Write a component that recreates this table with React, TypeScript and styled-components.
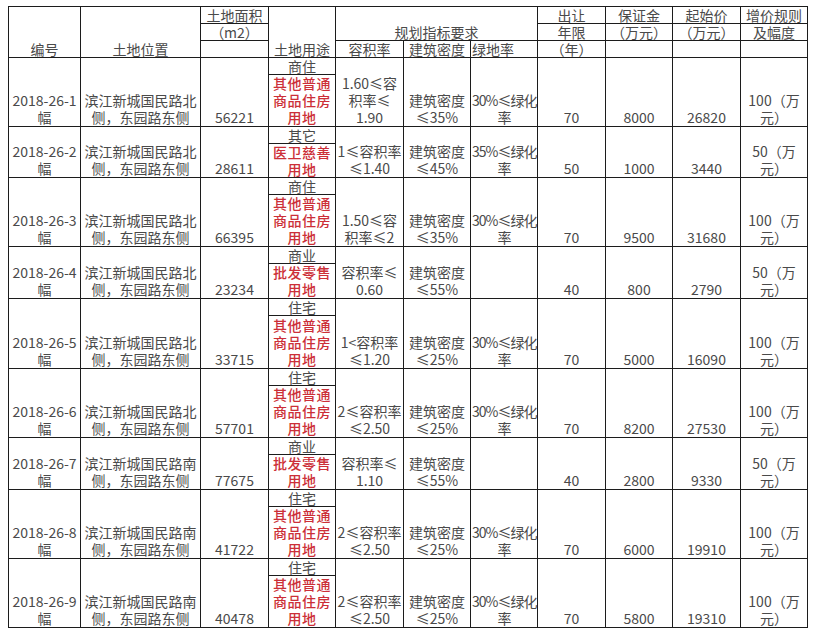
import React from 'react';
import styled, { createGlobalStyle } from 'styled-components';

const GlobalStyle = createGlobalStyle`
    body {
        margin: 0;
        padding: 6px 0 0 8px;
        background: #ffffff;
        font-family: "Noto Sans CJK SC", "Noto Sans", sans-serif;
        color: #4a4a4a;
    }
`;

// 地块数据
interface Parcel {
    no: string;
    location: string;
    area: string;
    useType: string;
    useDetail: string[];
    far: string[];
    density: string[];
    green: string[];
    years: string;
    deposit: string;
    price: string;
    rule: string;
    height: number;
}

const north = '滨江新城国民路北';
const south = '滨江新城国民路南';
const housing = ['其他普通', '商品住房', '用地'];
const retail = ['批发零售', '用地'];
const green30 = ['30%≤绿化', '率'];
const rule100 = '100（万';
const rule50 = '50（万';

const parcels: Parcel[] = [
    { no: '1', location: north, area: '56221', useType: '商住', useDetail: housing, far: ['1.60≤容', '积率≤', '1.90'], density: ['建筑密度', '≤35%'], green: green30, years: '70', deposit: '8000', price: '26820', rule: rule100, height: 69 },
    { no: '2', location: north, area: '28611', useType: '其它', useDetail: ['医卫慈善', '用地'], far: ['1≤容积率', '≤1.40'], density: ['建筑密度', '≤45%'], green: ['35%≤绿化', '率'], years: '50', deposit: '1000', price: '3440', rule: rule50, height: 51 },
    { no: '3', location: north, area: '66395', useType: '商住', useDetail: housing, far: ['1.50≤容', '积率≤2'], density: ['建筑密度', '≤35%'], green: green30, years: '70', deposit: '9500', price: '31680', rule: rule100, height: 69 },
    { no: '4', location: north, area: '23234', useType: '商业', useDetail: retail, far: ['容积率≤', '0.60'], density: ['建筑密度', '≤55%'], green: [], years: '40', deposit: '800', price: '2790', rule: rule50, height: 52 },
    { no: '5', location: north, area: '33715', useType: '住宅', useDetail: housing, far: ['1<容积率', '≤1.20'], density: ['建筑密度', '≤25%'], green: green30, years: '70', deposit: '5000', price: '16090', rule: rule100, height: 70 },
    { no: '6', location: north, area: '57701', useType: '住宅', useDetail: housing, far: ['2≤容积率', '≤2.50'], density: ['建筑密度', '≤25%'], green: green30, years: '70', deposit: '8200', price: '27530', rule: rule100, height: 69 },
    { no: '7', location: south, area: '77675', useType: '商业', useDetail: retail, far: ['容积率≤', '1.10'], density: ['建筑密度', '≤55%'], green: [], years: '40', deposit: '2800', price: '9330', rule: rule50, height: 52 },
    { no: '8', location: south, area: '41722', useType: '住宅', useDetail: housing, far: ['2≤容积率', '≤2.50'], density: ['建筑密度', '≤25%'], green: green30, years: '70', deposit: '6000', price: '19910', rule: rule100, height: 69 },
    { no: '9', location: south, area: '40478', useType: '住宅', useDetail: housing, far: ['2≤容积率', '≤2.50'], density: ['建筑密度', '≤25%'], green: green30, years: '70', deposit: '5800', price: '19310', rule: rule100, height: 69 },
];

const colWidths = [72, 120, 68, 67, 68, 67, 67, 68, 67, 68, 67];

const Table = styled.table`
    border-collapse: collapse;
    table-layout: fixed;
    width: 799px;
    font-size: 14px;
    line-height: 17px;
    border: 1.5px solid #1c1c1c;
`;

const Cell = styled.td<{ $align?: 'left' | 'center'; $tight?: boolean }>`
    border: 1px solid #1c1c1c;
    padding: 0 1px;
    text-align: ${(p) => p.$align ?? 'center'};
    vertical-align: bottom;
    white-space: nowrap;
    overflow: hidden;
    letter-spacing: ${(p) => (p.$tight ? '-1px' : 'normal')};
`;

const Line = styled.div`
    height: 17px;
    line-height: 17px;
`;

const HeadRow = styled.tr`
    height: 16px;
    line-height: 16px;

    td {
        padding-top: 0;
        padding-bottom: 0;
    }
`;

const BodyRow = styled.tr<{ $h: number }>`
    height: ${(p) => p.$h - 1}px;
`;

// 土地用途セル
const UseCell = styled.td`
    border: 1px solid #1c1c1c;
    padding: 0;
    vertical-align: top;
`;

const UseStack = styled.div<{ $h: number }>`
    display: flex;
    flex-direction: column;
    height: ${(p) => p.$h - 1}px;
`;

const UseType = styled.div`
    height: 16px;
    flex: none;
    border-bottom: 1.5px solid #1c1c1c;
    text-align: center;
    line-height: 17px;
`;

const UseDetail = styled.div`
    flex: 1;
    display: flex;
    flex-direction: column;
    justify-content: flex-end;
    align-items: center;
    color: #cc2f38;
    font-weight: 500;
    letter-spacing: 0.5px;
`;

const Lines = ({ lines }: { lines: string[] }) => (
    <>
        {lines.map((l, i) => (
            <Line key={i}>{l}</Line>
        ))}
    </>
);

export default function App() {
    return (
        <>
            <GlobalStyle />
            <Table>
                <colgroup>
                    {colWidths.map((w, i) => (
                        <col key={i} style={{ width: w }} />
                    ))}
                </colgroup>
                <thead>
                    <HeadRow>
                        <Cell rowSpan={3}>编号</Cell>
                        <Cell rowSpan={3}>土地位置</Cell>
                        <Cell>土地面积</Cell>
                        <Cell rowSpan={3}>土地用途</Cell>
                        <Cell colSpan={3} rowSpan={2}>规划指标要求</Cell>
                        <Cell>出让</Cell>
                        <Cell>保证金</Cell>
                        <Cell>起始价</Cell>
                        <Cell>增价规则</Cell>
                    </HeadRow>
                    <HeadRow>
                        <Cell>（m2）</Cell>
                        <Cell>年限</Cell>
                        <Cell>（万元）</Cell>
                        <Cell>（万元）</Cell>
                        <Cell>及幅度</Cell>
                    </HeadRow>
                    <HeadRow>
                        <Cell />
                        <Cell>容积率</Cell>
                        <Cell>建筑密度</Cell>
                        <Cell $align="left">绿地率</Cell>
                        <Cell>（年）</Cell>
                        <Cell />
                        <Cell />
                        <Cell />
                    </HeadRow>
                </thead>
                <tbody>
                    {parcels.map((p) => (
                        <BodyRow key={p.no} $h={p.height}>
                            <Cell>
                                <Lines lines={[`2018-26-${p.no}`, '幅']} />
                            </Cell>
                            <Cell>
                                <Lines lines={[p.location, '侧，东园路东侧']} />
                            </Cell>
                            <Cell>
                                <Line>{p.area}</Line>
                            </Cell>
                            <UseCell>
                                <UseStack $h={p.height}>
                                    <UseType>{p.useType}</UseType>
                                    <UseDetail>
                                        {p.useDetail.map((l) => (
                                            <Line key={l}>{l}</Line>
                                        ))}
                                    </UseDetail>
                                </UseStack>
                            </UseCell>
                            <Cell>
                                <Lines lines={p.far} />
                            </Cell>
                            <Cell>
                                <Lines lines={p.density} />
                            </Cell>
                            <Cell $tight>
                                <Lines lines={p.green} />
                            </Cell>
                            <Cell>
                                <Line>{p.years}</Line>
                            </Cell>
                            <Cell>
                                <Line>{p.deposit}</Line>
                            </Cell>
                            <Cell>
                                <Line>{p.price}</Line>
                            </Cell>
                            <Cell>
                                <Lines lines={[p.rule, '元）']} />
                            </Cell>
                        </BodyRow>
                    ))}
                </tbody>
            </Table>
        </>
    );
}
